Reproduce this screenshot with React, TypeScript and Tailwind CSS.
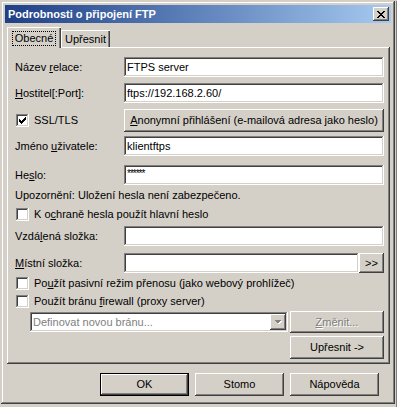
import React from "react";

const raised =
  "shadow-[inset_-1px_-1px_#404040,inset_1px_1px_#ffffff,inset_-2px_-2px_#808080,inset_2px_2px_#d4d0c8]";
const sunken =
  "shadow-[inset_-1px_-1px_#ffffff,inset_1px_1px_#808080,inset_-2px_-2px_#d4d0c8,inset_2px_2px_#404040]";

const closeRows = ["11000011", "01100110", "00111100", "00011000", "00111100", "01100110", "11000011"];
const checkRows = ["0000001", "0000011", "1000111", "1101110", "1111100", "0111000", "0010000"];

function PixelGlyph({ rows, color }: { rows: string[]; color: string }) {
  return (
    <svg width={rows[0].length} height={rows.length} shapeRendering="crispEdges">
      {rows.map((r, y) =>
        r.split("").map((c, x) => (c === "1" ? <rect key={`${x}-${y}`} x={x} y={y} width="1" height="1" fill={color} /> : null))
      )}
    </svg>
  );
}

function U({ children }: { children: React.ReactNode }) {
  return <span className="underline underline-offset-[1px]">{children}</span>;
}

function Field({ value, className = "" }: { value?: string; className?: string }) {
  return (
    <div className={`h-[20px] flex-1 bg-white ${sunken} flex items-center pl-[3px] ${className}`}>
      {value}
    </div>
  );
}

function Checkbox({ checked = false }: { checked?: boolean }) {
  return (
    <div className={`ml-[1px] w-[13px] h-[13px] shrink-0 bg-white ${sunken} flex items-center justify-center`}>
      {checked && <PixelGlyph rows={checkRows} color="#000000" />}
    </div>
  );
}

function FormRow({ label, value, className = "" }: { label: React.ReactNode; value?: string; className?: string }) {
  return (
    <div className={`flex items-center h-[20px] ${className}`}>
      <div className="w-[109px] shrink-0">{label}</div>
      <Field value={value} />
    </div>
  );
}

function CheckRow({ label, checked, className = "" }: { label: React.ReactNode; checked?: boolean; className?: string }) {
  return (
    <div className={`flex items-center h-[14px] ${className}`}>
      <Checkbox checked={checked} />
      <span className="ml-[5px]">{label}</span>
    </div>
  );
}

export default function App() {
  return (
    <div className="w-[397px] h-[407px] bg-[#d4d0c8] pt-[1px] pl-[1px] flex font-['Liberation_Sans',Arial,sans-serif] text-[11px] leading-none text-black overflow-hidden">
      <div className="w-[394px] h-[403px] shrink-0 bg-[#d4d0c8] p-[4px] flex flex-col shadow-[inset_-1px_-1px_#404040,inset_1px_1px_#d4d0c8,inset_-2px_-2px_#808080,inset_2px_2px_#ffffff]">
        {/* title bar */}
        <div className="h-[18px] bg-linear-to-r from-[#203f86] to-[#a6caf0] flex items-center pl-[3px] pr-[2px]">
          <span className="font-bold text-white">Podrobnosti o připojení FTP</span>
          <div className={`ml-auto w-[16px] h-[14px] bg-[#d4d0c8] ${raised} flex items-center justify-center`}>
            <PixelGlyph rows={closeRows} color="#000000" />
          </div>
        </div>

        {/* tabs */}
        <div className="h-[24px] ml-[2px] flex items-start">
          <div className="relative z-10 mt-[4px] w-[54px] h-[21px] bg-[#d4d0c8] shadow-[inset_1px_1px_#ffffff,inset_-1px_0_#404040,inset_-2px_0_#808080] flex items-start justify-center pt-[4px]">
            <span className="border border-dotted border-black px-[2px] py-[1px]">Obecné</span>
          </div>
          <div className="mt-[7px] w-[49px] h-[18px] bg-[#d4d0c8] shadow-[inset_1px_1px_#ffffff,inset_-1px_0_#404040,inset_-2px_0_#808080] flex items-start justify-center pt-[4px]">
            Upřesnit
          </div>
        </div>

        {/* panel */}
        <div className="h-[317px] ml-[2px] mr-[1px] bg-[#d4d0c8] shadow-[inset_-1px_-1px_#404040,inset_1px_1px_#ffffff,inset_-2px_-2px_#808080] pl-[8px] pr-[6px] pt-[10px] flex flex-col">
          <FormRow label={<>Název <U>r</U>elace:</>} value="FTPS server" />
          <FormRow className="mt-[6px]" label={<><U>H</U>ostitel[:Port]:</>} value="ftps://192.168.2.60/" />
          <div className="mt-[6px] h-[23px] flex items-center">
            <div className="w-[109px] shrink-0 flex items-center">
              <Checkbox checked />
              <span className="ml-[5px]">SSL/TLS</span>
            </div>
            <div className={`flex-1 h-[23px] bg-[#d4d0c8] ${raised} flex items-center justify-center`}>
              <span><U>A</U>nonymní přihlášení (e-mailová adresa jako heslo)</span>
            </div>
          </div>
          <FormRow className="mt-[4px]" label={<>Jméno <U>u</U>živatele:</>} value="klientftps" />
          <div className="mt-[9px] flex items-center h-[20px]">
            <div className="w-[109px] shrink-0">He<U>s</U>lo:</div>
            <div className={`h-[20px] flex-1 bg-white ${sunken} flex items-start pl-[3px] pt-[4px] text-[10px] tracking-[-1px]`}>
              ******
            </div>
          </div>
          <div className="mt-[3px] h-[14px] flex items-center">Upozornění: Uložení hesla není zabezpečeno.</div>
          <CheckRow className="mt-[5px]" label={<>K o<U>c</U>hraně hesla použít hlavní heslo</>} />
          <FormRow className="mt-[5px]" label={<>Vzdá<U>l</U>ená složka:</>} />
          <div className="mt-[7px] flex items-center h-[20px]">
            <div className="w-[109px] shrink-0"><U>M</U>ístní složka:</div>
            <Field />
            <div className={`w-[25px] h-[20px] bg-[#d4d0c8] ${raised} flex items-center justify-center`}>&gt;&gt;</div>
          </div>
          <CheckRow className="mt-[3px]" label={<>Po<U>u</U>žít pasivní režim přenosu (jako webový prohlížeč)</>} />
          <CheckRow className="mt-[4px]" label={<>Použít bránu <U>f</U>irewall (proxy server)</>} />
          <div className="mt-[3px] h-[22px] flex items-center">
            <div className={`ml-[15px] w-[258px] h-[20px] bg-white ${sunken} flex items-center pl-[3px] pr-[2px]`}>
              <span className="text-[#808080]">Definovat novou bránu...</span>
              <div className={`ml-auto w-[16px] h-[16px] bg-[#d4d0c8] ${raised} flex items-center justify-center`}>
                <svg width="8" height="5" shapeRendering="crispEdges">
                  <polygon points="1,1 8,1 4.5,4.5" fill="#ffffff" />
                  <polygon points="0,0 7,0 3.5,3.5" fill="#808080" />
                </svg>
              </div>
            </div>
            <div className={`ml-auto w-[94px] h-[22px] bg-[#d4d0c8] ${raised} flex items-center justify-center text-[#808080] [text-shadow:1px_1px_#ffffff]`}>
              <span><U>Z</U>měnit...</span>
            </div>
          </div>
          <div className={`mt-[3px] self-end w-[94px] h-[23px] bg-[#d4d0c8] ${raised} flex items-center justify-center`}>
            Upřesnit -&gt;
          </div>
        </div>

        {/* buttons */}
        <div className="mt-[9px] ml-[95px] flex gap-[6px]">
          <div className="w-[89px] h-[23px] bg-[#d4d0c8] shadow-[inset_0_0_0_1px_#000000,inset_-2px_-2px_#404040,inset_2px_2px_#ffffff,inset_-3px_-3px_#808080] flex items-center justify-center">
            OK
          </div>
          <div className={`w-[89px] h-[23px] bg-[#d4d0c8] ${raised} flex items-center justify-center`}>Stomo</div>
          <div className={`w-[89px] h-[23px] bg-[#d4d0c8] ${raised} flex items-center justify-center`}>Nápověda</div>
        </div>
      </div>
      <div className="ml-[1px] w-[1px] h-full bg-[#808080]" />
    </div>
  );
}
